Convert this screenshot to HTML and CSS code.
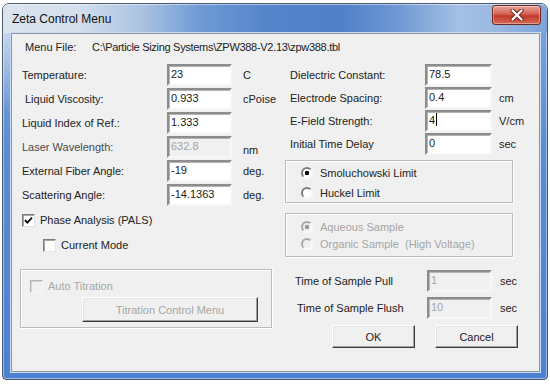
FILE: index.html
```html
<!DOCTYPE html>
<html lang="en">
<head>
  <meta charset="UTF-8">
  <title>Zeta Control Menu</title>
  <link rel="stylesheet" href="styles.css">
</head>
<body>
  <div class="window">
    <div class="titlebar">
      <span class="title">Zeta Control Menu</span>
      <span class="close">
        <svg width="14" height="12" viewBox="0 0 14 12">
          <path d="M2.5 1.5 L11.5 10.5 M11.5 1.5 L2.5 10.5" stroke="#6b1f18" stroke-width="4.2" stroke-linecap="round"/>
          <path d="M2.5 1.5 L11.5 10.5 M11.5 1.5 L2.5 10.5" stroke="#fff" stroke-width="2.4" stroke-linecap="round"/>
        </svg>
      </span>
    </div>

    <div class="frame-body">
      <div class="client">
        <div class="menu-file">
          <span class="menu-file-label">Menu File:</span>
          <span class="path">C:\Particle Sizing Systems\ZPW388-V2.13\zpw388.tbl</span>
        </div>

        <div class="form">
          <!-- left side -->
          <div class="col">
            <div class="fields fields-left">
              <div class="row"><span class="label">Temperature:</span><span class="field">23</span><span class="unit">C</span></div>
              <div class="row"><span class="label indent">Liquid Viscosity:</span><span class="field">0.933</span><span class="unit">cPoise</span></div>
              <div class="row"><span class="label">Liquid Index of Ref.:</span><span class="field">1.333</span></div>
              <div class="row"><span class="label dim">Laser Wavelength:</span><span class="field off">632.8</span><span class="unit low">nm</span></div>
              <div class="row"><span class="label">External Fiber Angle:</span><span class="field">-19</span><span class="unit">deg.</span></div>
              <div class="row"><span class="label">Scattering Angle:</span><span class="field">-14.1363</span><span class="unit">deg.</span></div>
            </div>

            <div class="check-row phase">
              <span class="check">
                <svg width="9" height="9" viewBox="0 0 9 9"><path d="M1 4 L3.3 6.6 L8 1.6" fill="none" stroke="#111" stroke-width="1.9"/></svg>
              </span>
              <span>Phase Analysis (PALS)</span>
            </div>
            <div class="check-row sub">
              <span class="check"></span>
              <span>Current Mode</span>
            </div>

            <div class="group titration">
              <div class="check-row disabled">
                <span class="check off"></span>
                <span>Auto Titration</span>
              </div>
              <button class="btn wide" disabled>Titration Control Menu</button>
            </div>
          </div>

          <!-- right side -->
          <div class="col">
            <div class="fields fields-right">
              <div class="row"><span class="label">Dielectric Constant:</span><span class="field">78.5</span></div>
              <div class="row"><span class="label">Electrode Spacing:</span><span class="field">0.4</span><span class="unit">cm</span></div>
              <div class="row"><span class="label">E-Field Strength:</span><span class="field">4<i class="caret"></i></span><span class="unit">V/cm</span></div>
              <div class="row"><span class="label">Initial Time Delay</span><span class="field">0</span><span class="unit">sec</span></div>
            </div>

            <div class="group limits">
              <div class="radio-row"><span class="radio on"></span><span>Smoluchowski Limit</span></div>
              <div class="radio-row"><span class="radio"></span><span>Huckel Limit</span></div>
            </div>

            <div class="group sample disabled">
              <div class="radio-row"><span class="radio on off"></span><span>Aqueous Sample</span></div>
              <div class="radio-row"><span class="radio off"></span><span>Organic Sample&nbsp; (High Voltage)</span></div>
            </div>

            <div class="row time pull"><span class="label">Time of Sample Pull</span><span class="field off">1</span><span class="unit">sec</span></div>
            <div class="row time flush"><span class="label">Time of Sample Flush</span><span class="field off">10</span><span class="unit">sec</span></div>

            <div class="buttons">
              <button class="btn">OK</button>
              <button class="btn">Cancel</button>
            </div>
          </div>
        </div>
      </div>
    </div>
  </div>
</body>
</html>
```

FILE: styles.css
```css
* {
  box-sizing: border-box;
}

html, body {
  margin: 0;
  padding: 0;
  background: #fff;
}

body {
  font-family: "Liberation Sans", Arial, sans-serif;
  font-size: 11px;
  color: #222;
}

/* window frame */
.window {
  width: 546px;
  height: 377px;
  margin: 3px 0 0 2px;
  border: 1px solid #4a596c;
  border-radius: 7px 7px 4px 4px;
  background:
    radial-gradient(ellipse 40px 90px at 4px 20px, rgba(214, 225, 238, 0.9), rgba(214, 225, 238, 0)),
    linear-gradient(to bottom, #7fa6dc, #5a8bd3 40%, #4c80d2);
  box-shadow: inset 0 0 0 1px rgba(255, 255, 255, 0.45);
  display: flex;
  flex-direction: column;
}

.titlebar {
  height: 29px;
  display: flex;
  align-items: center;
  justify-content: space-between;
  padding: 0 6px 0 9px;
  border-radius: 6px 6px 0 0;
  background: linear-gradient(to right, #dbe4ee 0%, #d3dfec 14%, #a9c1e2 26%, #6f9bd6 36%, #5585cb 48%, #5080c9 62%, #6c97d4 72%, #a5c0e4 84%, #9bb8e2 90%, #7ea5da 100%);
  box-shadow: inset 0 1px 0 rgba(255, 255, 255, 0.5);
}

.title {
  font-size: 12px;
  color: #111;
}

.close {
  align-self: flex-start;
  margin-top: 1px;
  width: 49px;
  height: 20px;
  border: 1px solid #6e2a22;
  border-radius: 3px;
  background: linear-gradient(#e8a89d, #d4604f 45%, #c03a2a 55%, #d76a54);
  box-shadow: inset 0 0 0 1px rgba(255, 255, 255, 0.35);
  display: flex;
  align-items: center;
  justify-content: center;
}

.frame-body {
  flex: 1;
  padding: 0 7px 7px 8px;
  display: flex;
}

.client {
  flex: 1;
  background: #f0f0f0;
  border: 1px solid #8693a3;
  box-shadow: 0 0 0 1px #cddff3;
}

.menu-file {
  display: flex;
  height: 20px;
  padding: 6px 0 0 13px;
  line-height: 14px;
}

.menu-file-label {
  width: 67px;
}

.path {
  letter-spacing: -0.3px;
}

/* form columns */
.form {
  margin-top: 10px;
  padding-left: 8px;
  display: grid;
  grid-template-columns: 252px 235px;
  column-gap: 13px;
}

.col {
  display: flex;
  flex-direction: column;
}

.fields {
  display: flex;
  flex-direction: column;
}

.fields-left {
  gap: 2px;
}

.fields-right {
  gap: 1px;
}

.row {
  display: flex;
  align-items: center;
  height: 22px;
}

.label {
  flex: none;
}

.fields-left .label {
  width: 147px;
  padding-left: 2px;
}

.fields-left .label.indent {
  padding-left: 5px;
}

.fields-right .label {
  width: 140px;
  padding-left: 5px;
}

.dim {
  color: #4a4a4a;
}

.field {
  width: 65px;
  height: 22px;
  flex: none;
  background: #fff;
  border: 2px solid;
  border-color: #8c8c8c #f6f6f6 #f6f6f6 #8c8c8c;
  box-shadow: inset 1px 1px 0 #b4b4b4;
  padding: 1px 2px 0;
  line-height: 14px;
  color: #1a1a1a;
}

.fields-right .field {
  width: 67px;
}

.field.off {
  background: #f0f0f0;
  color: #a4a4a4;
}

.caret {
  display: inline-block;
  width: 1px;
  height: 13px;
  margin-left: 1px;
  vertical-align: -2px;
  background: #000;
}

.unit {
  margin-left: 11px;
}

.unit.low {
  padding-top: 6px;
}

.fields-right .unit {
  margin-left: 7px;
}

/* checkboxes */
.check-row {
  display: flex;
  align-items: center;
  gap: 5px;
  height: 16px;
}

.check-row.phase {
  margin-top: 6px;
  padding-left: 2px;
}

.check-row.sub {
  margin-top: 9px;
  padding-left: 23px;
}

.check {
  width: 13px;
  height: 13px;
  flex: none;
  background: #fff;
  border: 1px solid;
  border-color: #7c7c7c #e6e6e6 #e6e6e6 #7c7c7c;
  box-shadow: inset 1px 1px 0 #a8a8a8;
  display: flex;
  align-items: center;
  justify-content: center;
}

.check.off {
  background: #f0f0f0;
  border-color: #b4b4b4 #f8f8f8 #f8f8f8 #b4b4b4;
  box-shadow: inset 1px 1px 0 #d4d4d4;
}

.disabled {
  color: #a6a6a6;
}

/* group boxes */
.group {
  border: 1px solid #bcbcbc;
  box-shadow: inset 1px 1px 0 #fff, 1px 1px 0 #fff;
}

.titration {
  margin-top: 16px;
  height: 59px;
  padding: 9px 0 0 9px;
}

.titration .check-row {
  height: 14px;
}

.limits {
  margin-top: 5px;
  width: 228px;
  height: 43px;
  padding: 2px 0 0 15px;
}

.limits .radio-row {
  height: 20px;
}

.sample {
  margin-top: 10px;
  width: 228px;
  height: 44px;
  padding: 4px 0 0 15px;
}

.sample .radio-row {
  height: 17px;
}

.radio-row {
  display: flex;
  align-items: center;
  gap: 7px;
}

.radio {
  width: 12px;
  height: 12px;
  flex: none;
  border-radius: 50%;
  border: 2px solid;
  border-color: #7e7e7e #fafafa #fafafa #7e7e7e;
  background: #fff;
}

.radio.on {
  background: radial-gradient(circle, #111 0, #111 2px, #fff 2.6px);
}

.radio.off {
  background: #f0f0f0;
  border-color: #a8a8a8 #fafafa #fafafa #a8a8a8;
}

.radio.on.off {
  background: radial-gradient(circle, #9a9a9a 0, #9a9a9a 2px, #f0f0f0 2.6px);
}

/* time rows */
.time .label {
  width: 142px;
  padding-left: 10px;
}

.time .unit {
  margin-left: 8px;
}

.time.pull {
  margin-top: 13px;
}

.time.flush {
  margin-top: 5px;
}

.time.flush .label {
  padding-left: 12px;
}

/* buttons */
.buttons {
  margin-top: 6px;
  padding-left: 47px;
  display: flex;
  gap: 20px;
}

.btn {
  width: 83px;
  height: 23px;
  padding: 0;
  font: inherit;
  font-size: 11px;
  color: #1a1a1a;
  background: #f0f0f0;
  border: 1px solid;
  border-color: #fff #3c3c3c #3c3c3c #fff;
  box-shadow: inset -1px -1px 0 #a0a0a0, inset 1px 1px 0 #e4e4e4;
}

.btn:disabled {
  color: #a6a6a6;
}

.btn.wide {
  display: block;
  width: 176px;
  height: 25px;
  margin: 4px 0 0 52px;
}
```
